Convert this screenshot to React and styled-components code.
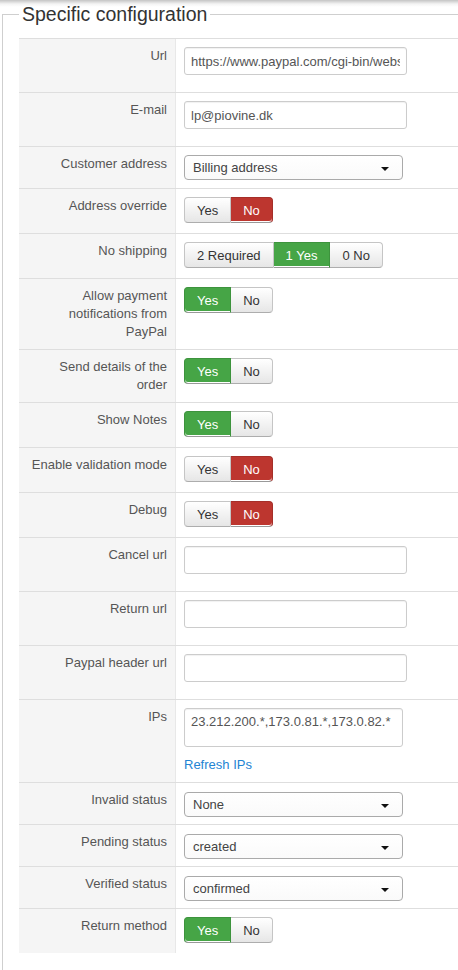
import React from "react";
import styled, { createGlobalStyle, css } from "styled-components";

const GlobalStyle = createGlobalStyle`
  html, body {
    margin: 0;
    padding: 0;
    overflow: hidden;
  }
  body {
    font-family: "Liberation Sans", Arial, sans-serif;
    font-size: 13px;
    color: #333;
    background: linear-gradient(#c4c4c4, #f4f4f4 4px, #fff 7px) no-repeat #fff;
  }
`;

const Page = styled.div`
  width: 458px;
  padding-top: 2px;
`;

const Fieldset = styled.fieldset`
  margin: 0 0 0 2px;
  padding: 12px 0 40px 16px;
  border: 1px solid #cfcfcf;
  border-right: none;
  min-width: 0;
`;

const Legend = styled.legend`
  padding: 0 3px;
  font-size: 19.5px;
  line-height: 24px;
  color: #333;
`;

const Table = styled.div`
  display: flex;
  flex-direction: column;
`;

const Row = styled.div`
  display: grid;
  grid-template-columns: 157px 1fr;
  border-top: 1px solid #dedede;
`;

const Label = styled.div`
  background: #f5f5f5;
  border-right: 1px solid #e8e8e8;
  padding: 8px 8px 8px 10px;
  text-align: right;
  color: #555;
  line-height: 18px;
`;

const Cell = styled.div`
  padding: ${(p) => (p.$tight ? "9px 8px 7px" : "8px 8px")};
  background: #fff;
  min-width: 0;
`;

const TextInput = styled.input`
  box-sizing: border-box;
  display: block;
  width: 223px;
  height: 28px;
  margin: 0 0 9px;
  padding: 4px 6px;
  border: 1px solid #ccc;
  border-radius: 3px;
  font-family: inherit;
  font-size: 13px;
  color: #555;
  background: #fff;
  box-shadow: inset 0 1px 1px rgba(0, 0, 0, 0.06);
`;

const TextArea = styled.textarea`
  box-sizing: border-box;
  display: block;
  width: 219px;
  height: 39px;
  margin: 0 0 9px;
  padding: 4px 6px;
  border: 1px solid #ccc;
  border-radius: 3px;
  font-family: inherit;
  font-size: 13px;
  line-height: 18px;
  color: #555;
  resize: none;
  box-shadow: inset 0 1px 1px rgba(0, 0, 0, 0.06);
`;

const Select = styled.div`
  box-sizing: border-box;
  width: 219px;
  height: 25px;
  display: flex;
  align-items: center;
  justify-content: space-between;
  padding: 0 13px 0 8px;
  border: 1px solid #aaa;
  border-radius: 4px;
  background: linear-gradient(#fff, #fafafa);
  color: #444;
  font-size: 13px;
`;

const Caret = styled.span`
  width: 0;
  height: 0;
  border-left: 4px solid transparent;
  border-right: 4px solid transparent;
  border-top: 4px solid #111;
  margin-top: 2px;
`;

const Group = styled.div`
  display: inline-flex;
  height: 26px;
  margin-bottom: 2px;
`;

const activeStyles = {
  green: css`
    background: #46a546;
    border-color: #3d933d #3d933d #999;
    color: #fff;
    box-shadow: inset 0 -1px 0 #fff;
  `,
  red: css`
    background: #bd362f;
    border-color: #a52f29 #a52f29 #999;
    color: #fff;
    box-shadow: inset 0 -1px 0 #fff;
  `,
};

const Btn = styled.span`
  box-sizing: border-box;
  display: flex;
  align-items: center;
  padding: 0 12px;
  border: 1px solid #c5c5c5;
  border-bottom-color: #adadad;
  background: linear-gradient(#ffffff, #e6e6e6);
  color: #333;
  font-size: 13px;
  & + & {
    border-left: none;
  }
  &:first-child {
    border-radius: 4px 0 0 4px;
  }
  &:last-child {
    border-radius: 0 4px 4px 0;
  }
  ${(p) => p.$active && activeStyles[p.$active]}
`;

const Link = styled.a`
  display: block;
  color: #2384d3;
  line-height: 18px;
  text-decoration: none;
`;

const Toggle = ({ options, value, tone }) => (
  <Group>
    {options.map((o) => (
      <Btn key={o} $active={o === value ? tone : null}>
        {o}
      </Btn>
    ))}
  </Group>
);

const yesNo = ["Yes", "No"];

const fields = [
  { label: "Url", type: "input", value: "https://www.paypal.com/cgi-bin/webscr" },
  { label: "E-mail", type: "input", value: "lp@piovine.dk" },
  { label: "Customer address", type: "select", value: "Billing address" },
  { label: "Address override", type: "toggle", value: "No" },
  { label: "No shipping", type: "toggle", options: ["2 Required", "1 Yes", "0 No"], value: "1 Yes", tone: "green" },
  { label: "Allow payment notifications from PayPal", type: "toggle", value: "Yes" },
  { label: "Send details of the order", type: "toggle", value: "Yes" },
  { label: "Show Notes", type: "toggle", value: "Yes" },
  { label: "Enable validation mode", type: "toggle", value: "No" },
  { label: "Debug", type: "toggle", value: "No" },
  { label: "Cancel url", type: "input", value: "" },
  { label: "Return url", type: "input", value: "" },
  { label: "Paypal header url", type: "input", value: "" },
  { label: "IPs", type: "ips", value: "23.212.200.*,173.0.81.*,173.0.82.*" },
  { label: "Invalid status", type: "select", value: "None" },
  { label: "Pending status", type: "select", value: "created" },
  { label: "Verified status", type: "select", value: "confirmed" },
  { label: "Return method", type: "toggle", value: "Yes" },
];

const renderControl = (f) => {
  switch (f.type) {
    case "input":
      return <TextInput defaultValue={f.value} />;
    case "select":
      return (
        <Select>
          <span>{f.value}</span>
          <Caret />
        </Select>
      );
    case "ips":
      return (
        <>
          <TextArea defaultValue={f.value} />
          <Link href="#">Refresh IPs</Link>
        </>
      );
    default:
      return (
        <Toggle
          options={f.options || yesNo}
          value={f.value}
          tone={f.tone || (f.value === "Yes" ? "green" : "red")}
        />
      );
  }
};

export default function App() {
  return (
    <Page>
      <GlobalStyle />
      <Fieldset>
        <Legend>Specific configuration</Legend>
        <Table>
          {fields.map((f) => (
            <Row key={f.label}>
              <Label>{f.label}</Label>
              <Cell $tight={f.type === "select" && f.label !== "Customer address"}>
                {renderControl(f)}
              </Cell>
            </Row>
          ))}
        </Table>
      </Fieldset>
    </Page>
  );
}
